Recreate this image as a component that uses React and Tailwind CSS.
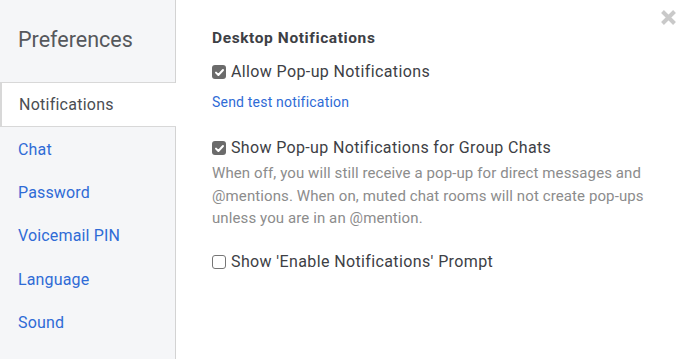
import React from "react";

function Check({ checked }) {
  return checked ? (
    <span className="inline-flex w-[14px] h-[14px] rounded-[3px] bg-[#6b6b6b] items-center justify-center shrink-0">
      <svg width="11" height="11" viewBox="0 0 11 11">
        <path d="M2 5.6 L4.4 8 L9 3" fill="none" stroke="white" strokeWidth="2" strokeLinecap="round" strokeLinejoin="round" />
      </svg>
    </span>
  ) : (
    <span className="inline-block w-[14px] h-[14px] rounded-[3px] border border-[#767676] bg-white shrink-0" />
  );
}

export default function App() {
  const items = ["Chat", "Password", "Voicemail PIN", "Language", "Sound"];
  return (
    <div className="w-[681px] h-[359px] flex bg-white overflow-hidden relative" style={{ fontFamily: "Roboto, 'Liberation Sans', sans-serif" }}>
      <div className="w-[176px] shrink-0 bg-[#f5f6f8] border-r border-[#d3d3d3] flex flex-col">
        <div className="h-[83px] border-b border-[#d8d8d8] pl-[18px] pt-[26px] text-[21.5px] text-[#55585c] leading-[28px]">Preferences</div>
        <div className="h-[44px] bg-white border-l-2 border-[#2f6bd6] border-b border-[#d8d8d8] -mr-px pl-[17px] flex items-center text-[16px] tracking-[0.25px] text-[#4a4d52]">Notifications</div>
        <div className="flex flex-col pt-[1px]">
          {items.map((t) => (
            <div key={t} className="h-[43.4px] pl-[18px] flex items-center text-[16px] tracking-[0.15px] text-[#2f6bd6]">{t}</div>
          ))}
        </div>
      </div>
      <div className="flex-1 pl-[36px] pt-[29px] text-[#3d4045]">
        <div className="text-[15.5px] font-bold leading-[18px] tracking-[0.6px] text-[#3d4045]">Desktop Notifications</div>
        <div className="mt-[14px] flex items-center gap-[5px] text-[16px] leading-[22px] tracking-[0.38px]">
          <Check checked />
          <span>Allow Pop-up Notifications</span>
        </div>
        <div className="mt-[11px] text-[14px] leading-[16px] tracking-[0.2px] text-[#2f6bd6]">Send test notification</div>
        <div className="mt-[27px] flex items-center gap-[5px] text-[16px] leading-[22px] tracking-[0.35px]">
          <Check checked />
          <span>Show Pop-up Notifications for Group Chats</span>
        </div>
        <div className="mt-[3px] text-[15px] leading-[22.5px] tracking-[0.1px] text-[#8c8c8c] w-[455px]">
          When off, you will still receive a pop-up for direct messages and @mentions. When on, muted chat rooms will not create pop-ups unless you are in an @mention.
        </div>
        <div className="mt-[21px] flex items-center gap-[5px] text-[16px] leading-[22px] tracking-[0.38px]">
          <Check checked={false} />
          <span>Show 'Enable Notifications' Prompt</span>
        </div>
      </div>
      <div className="absolute right-[4px] top-[9px]">
        <svg width="17" height="17" viewBox="0 0 17 17">
          <path d="M2.5 2.5 L14.5 14.5 M14.5 2.5 L2.5 14.5" stroke="#c9c9c9" strokeWidth="4" strokeLinecap="butt" />
        </svg>
      </div>
    </div>
  );
}
